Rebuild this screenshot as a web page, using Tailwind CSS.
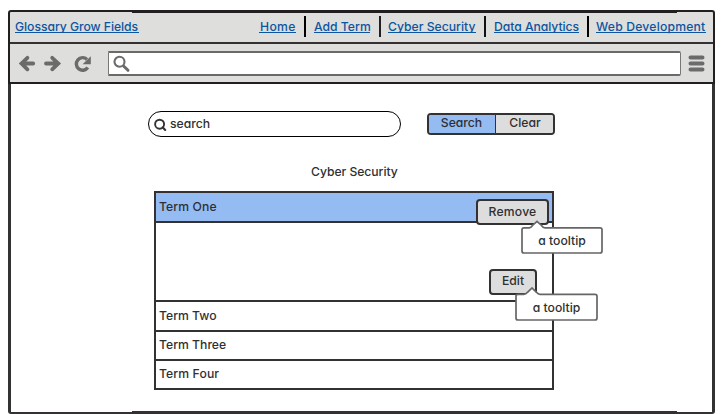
<!DOCTYPE html>
<html lang="en">
<head>
<meta charset="utf-8">
<title>Glossary Grow Fields</title>
<script src="https://cdn.jsdelivr.net/npm/@tailwindcss/browser@4"></script>
</head>
<body class="w-[723px] h-[414px] overflow-hidden bg-white pt-[10px] pl-[8px] font-[Inter,'Liberation_Sans',sans-serif] [font-feature-settings:'cv11'] text-[12.2px] font-medium leading-[16px] text-[#2f2f31]">
<div class="relative flex flex-col w-[707px] h-[404px]">
  <header class="w-[707px] h-[74px] bg-[#dededd] border-x-2 border-t-2 border-b-2 border-[#231f20] rounded-t-[3px] flex flex-col">
    <div class="relative h-[32px] border-b-2 border-[#353132] flex items-start pt-[7px] pl-[5px] text-[#0c55a0]">
      <div class="absolute left-[122px] top-0 w-[545px] h-px bg-[#231f20]"></div>
      <a class="w-[124px] h-[14px] border-b border-[#0c55a0] whitespace-nowrap leading-[15px] tracking-[-0.05px]">Glossary Grow Fields</a>
      <nav class="flex ml-[120px] whitespace-nowrap leading-[15px]">
        <a class="w-[37px] h-[14px] border-b border-[#0c55a0] tracking-[0.3px] pl-px">Home</a>
        <i class="w-[2px] h-[21px] -mt-[3px] mx-[8px] bg-black"></i>
        <a class="w-[56px] h-[14px] border-b border-[#0c55a0]">Add Term</a>
        <i class="w-[2px] h-[21px] -mt-[3px] ml-[9px] mr-[7px] bg-[#231f20]"></i>
        <a class="w-[88px] h-[14px] border-b border-[#0c55a0]">Cyber Security</a>
        <i class="w-[2px] h-[21px] -mt-[3px] ml-[8px] mr-[8px] bg-[#111]"></i>
        <a class="w-[85px] h-[14px] border-b border-[#0c55a0] tracking-[-0.05px]">Data Analytics</a>
        <i class="w-[2px] h-[21px] -mt-[3px] ml-[8px] mr-[7px] bg-black"></i>
        <a class="w-[110px] h-[14px] border-b border-[#0c55a0] tracking-[0.18px]">Web Development</a>
      </nav>
    </div>
    <div class="flex items-start h-[38px] pt-[7px]">
      <svg class="w-[98px] h-[26px] shrink-0" viewBox="10 51 98 26" fill="none" stroke="#6b6b6b">
        <path d="M33.2 63.5H23M27.4 57.8L21.5 63.5L27.4 69.3" stroke-width="3.8" stroke-linecap="round"/>
        <path d="M46 63.5H57M52.2 57.8L58.3 63.5L52.2 69.3" stroke-width="3.8" stroke-linecap="round"/>
        <path d="M87.8 67.6A6.3 6.3 0 1 1 87 59.4" stroke-width="3.4"/>
        <path d="M90.8 56.3V64.2H82.6Z" fill="#6b6b6b" stroke="none"/>
      </svg>
      <div class="w-[573px] h-[25px] bg-white border border-[#777] border-y-2 border-y-[#6b6969] pl-[4px] pt-[2px] rounded-r-[2px]">
        <svg class="w-[18px] h-[18px]" viewBox="0 0 18 18" fill="none" stroke="#6b6b6b" stroke-linecap="round"><circle cx="6.5" cy="6.8" r="5" stroke-width="2.1"/><path d="M10.8 11.2L15 15.3" stroke-width="3"/></svg>
      </div>
      <svg class="w-[18px] h-[19px] ml-[7px] mt-[3px]" viewBox="0 0 18 19" stroke="#6b6b6b" stroke-width="4" stroke-linecap="round"><path d="M2.5 3.5H14.5M2.5 9.6H14.5M2.5 15.6H14.5"/></svg>
    </div>
  </header>

  <main class="relative w-[707px] h-[330px] border-x-[3px] border-b-2 border-[#333132] rounded-b-[3px] flex flex-col">
    <div class="absolute left-[121px] bottom-0 w-[545px] h-px bg-[#333132]"></div>
    <div class="flex mt-[27px] ml-[137px]">
      <label class="flex items-start w-[253px] h-[26px] border border-black rounded-full pl-[5px] pt-[4px]">
        <svg class="w-[13px] h-[14px] mt-[2px]" viewBox="0 0 13 14" fill="none" stroke="#333" stroke-linecap="round"><circle cx="5.6" cy="6.2" r="4.5" stroke-width="1.9"/><path d="M8.6 9.3L11.2 12" stroke-width="2.1"/></svg>
        <span class="ml-[3px]">search</span>
      </label>
      <div class="flex w-[128px] h-[22px] ml-[26px] mt-[2px] border-2 border-[#333132] rounded-[4px] overflow-hidden text-center">
        <button class="w-[67px] h-[18px] pr-px pb-[3px] bg-[#94bbf2] border-r border-[#333132] leading-[14px]">Search</button>
        <button class="flex-1 h-[18px] pl-px pb-[3px] bg-[#dddddd] leading-[14px]">Clear</button>
      </div>
    </div>

    <h1 class="mt-[27px] ml-[300px] leading-[16px] h-[16px] whitespace-nowrap tracking-[-0.05px]">Cyber Security</h1>

    <div class="relative mt-[11px] ml-[143px] w-[400px] h-[199px] border-2 border-[#333132] flex flex-col">
      <div class="h-[30px] bg-[#94bbf2] border-b-2 border-[#333132] pl-[3px] pt-[6px] tracking-[0.1px]">Term One</div>
      <div class="h-[79px] border-b-2 border-[#333132]"></div>
      <div class="h-[30px] border-b-2 border-[#333132] pl-[3px] pt-[6px]">Term Two</div>
      <div class="h-[29px] border-b-2 border-[#333132] pl-[3px] pt-[5px]">Term Three</div>
      <div class="h-[27px] pl-[3px] pt-[5px] tracking-[0.1px]">Term Four</div>

      <button class="absolute left-[320px] top-[6px] w-[73px] h-[26px] bg-[#dddddd] border-2 border-[#333132] rounded-[4px] leading-[20px] pb-px tracking-[0.2px]">Remove</button>
      <div class="absolute left-[365px] top-[27px] w-[82px] h-[34px]">
        <svg class="absolute inset-0 w-[82px] h-[34px]" viewBox="0 0 82 34" fill="#fff" stroke="#666"><path d="M3 7.8H8.2Q10 7.8 11.5 5.5L16 1.3L20.5 5.5Q22 7.8 24 7.8H79Q81 7.8 81 9.8V31Q81 33 79 33H3Q1 33 1 31V9.8Q1 7.8 3 7.8Z" stroke-width="1.7"/></svg>
        <span class="relative block text-center pt-[13px]">a tooltip</span>
      </div>
      <button class="absolute left-[333px] top-[76px] w-[48px] h-[26px] bg-[#dddddd] border-2 border-[#333132] rounded-[4px] leading-[20px] pb-[2px]">Edit</button>
      <div class="absolute left-[359px] top-[94px] w-[83px] h-[34px]">
        <svg class="absolute inset-0 w-[83px] h-[34px]" viewBox="0 0 83 34" fill="#fff" stroke="#666"><path d="M3 7.3H8.7Q11 7.3 12.5 5.3L17 1L21.5 5.3Q23 7.3 25 7.3H80Q82 7.3 82 9.3V31Q82 33 80 33H3Q1 33 1 31V9.3Q1 7.3 3 7.3Z" stroke-width="1.7"/></svg>
        <span class="relative block text-center pt-[13px]">a tooltip</span>
      </div>
    </div>
  </main>
</div>
</body>
</html>
